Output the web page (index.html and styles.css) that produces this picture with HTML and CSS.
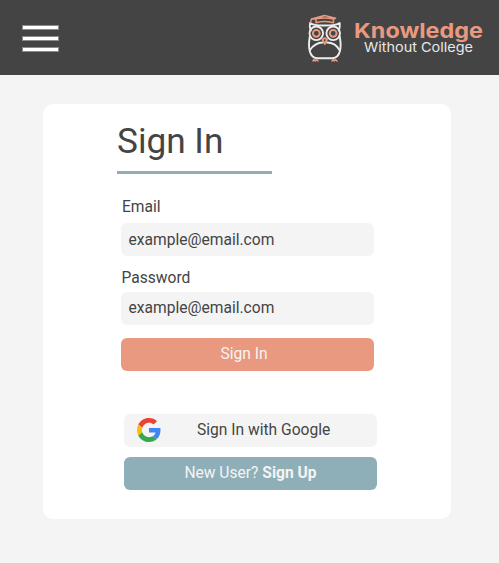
FILE: index.html
```html
<!DOCTYPE html>
<html lang="en">
<head>
<meta charset="utf-8">
<title>Sign In</title>
<link rel="stylesheet" href="styles.css">
</head>
<body>
<header class="topbar">
  <button class="menu" aria-label="Menu"><span></span><span></span><span></span></button>
  <div class="brand">
    <svg class="owl" width="36" height="49" viewBox="0 0 36 49" fill="none" stroke-linejoin="round" stroke-linecap="round">
      <g stroke="#ededed" stroke-width="1.900">
        <path d="M3 10C7 12.800 12 12.500 17.500 12.500S28.500 12.800 32.700 10C33.200 13 32.500 15.500 31.800 17.500M3 10C2.400 13 3 15.500 3.800 17.500"/>
        <circle cx="9.300" cy="20.300" r="6.800"/>
        <circle cx="26.200" cy="20.300" r="6.800"/>
        <path d="M2.800 23.500C1 34 2 44.500 10 45.300H25.500C33.800 44.500 34.700 34 32.700 23.500"/>
        <path d="M3 37C5.500 32.500 11 29.500 15.500 29.500M20 29.500C25 29.500 30 32.500 32.500 37"/>
      </g>
      <g stroke="#e8997f" stroke-width="1.500">
        <path d="M9 9.800V5.800L17.500 2.500 28.500 5.300 26.500 6V9.800C21 8.200 14 8.200 9 9.800ZM9 5.800C14 4.800 21 4.800 26.500 6M9 5.800 4.500 6 3.500 9.500M4.500 6 17.500 2.500"/>
        <circle cx="9.300" cy="20.300" r="3.400" stroke-width="2"/>
        <circle cx="26.200" cy="20.300" r="3.400" stroke-width="2"/>
        <path d="M15.500 26.500 17.700 25 20 26.500 17.700 31Z" stroke-width="1.800"/>
        <path d="M6 48 7 46.500 8.300 48 9.500 46.500 11 48M25 48 26 46.500 27.300 48 28.500 46.500 30 48"/>
      </g>
    </svg>
    <svg class="wordmark" width="132" height="42" viewBox="0 0 132 42">
      <text class="word-top" x="3" y="21.500" textLength="129" lengthAdjust="spacingAndGlyphs">Knowledge</text>
      <text class="word-sub" x="13" y="36" textLength="109" lengthAdjust="spacingAndGlyphs">Without College</text>
    </svg>
  </div>
</header>
<main class="card">
  <h1>Sign In</h1>
  <form class="form">
    <label class="email-label">Email</label>
    <div class="field">example@email.com</div>
    <label class="password-label">Password</label>
    <div class="field">example@email.com</div>
    <button type="button" class="btn submit">Sign In</button>
  </form>
  <div class="alternatives">
    <button type="button" class="btn google">
      <svg width="24" height="24" viewBox="0 0 48 48">
        <path fill="#ea4335" d="M24 9.500c3.540 0 6.710 1.220 9.210 3.600l6.850-6.850C35.900 2.380 30.470 0 24 0 14.620 0 6.510 5.380 2.560 13.220l7.980 6.190C12.430 13.720 17.740 9.500 24 9.500z"/>
        <path fill="#4285f4" d="M46.980 24.550c0-1.570-.15-3.090-.38-4.550H24v9.020h12.940c-.58 2.960-2.260 5.480-4.780 7.180l7.730 6c4.510-4.180 7.090-10.360 7.090-17.650z"/>
        <path fill="#fbbc05" d="M10.530 28.590c-.48-1.450-.76-2.990-.76-4.590s.27-3.140.76-4.590l-7.980-6.190C.92 16.460 0 20.120 0 24s.92 7.540 2.560 10.780z"/>
        <path fill="#34a853" d="M24 48c6.480 0 11.930-2.130 15.890-5.810l-7.730-6c-2.150 1.450-4.920 2.300-8.160 2.300-6.260 0-11.570-4.220-13.470-9.910l-7.980 6.190C6.510 42.620 14.620 48 24 48z"/>
      </svg>
      <span>Sign In with Google</span>
    </button>
    <button type="button" class="btn signup">New User? <b>Sign Up</b></button>
  </div>
</main>
</body>
</html>
```

FILE: styles.css
```css
* { box-sizing: border-box; }
body {
  margin: 0;
  min-height: 563px;
  background: #f4f4f4;
  color: #444;
  font: 15.600px/20px Roboto, sans-serif;
}
.topbar {
  display: flex;
  justify-content: space-between;
  height: 75px;
  padding: 0 16px 0 22px;
  background: #444;
}
.menu {
  display: flex;
  flex-direction: column;
  gap: 6px;
  width: 37px;
  margin: 24.500px 0 0;
  padding: 0;
  border: 0;
  background: none;
}
.menu span {
  width: 37px;
  height: 5px;
  border: 1px solid #8a8a8a;
  background: #fff;
}
.brand { display: flex; padding-top: 13px; }
.owl { margin-right: 8px; }
.wordmark { margin-top: 3px; overflow: visible; }
.word-top { font: 700 20.500px Inter, sans-serif; fill: #e8997f; }
.word-sub { font: 400 13px Inter, sans-serif; fill: #e8e8e8; }
.card {
  width: 408px;
  height: 415px;
  margin: 28.500px 0 0 43px;
  padding: 17px 74px 0;
  border-radius: 10px;
  background: #fff;
}
h1 {
  width: 155px;
  height: 53px;
  margin: 0;
  border-bottom: 3px solid #8fafb8;
  font-size: 35.200px;
  font-weight: 400;
  line-height: 41px;
}
.form {
  display: flex;
  flex-direction: column;
  width: 253px;
  margin: 23px 0 0 3.500px;
}
.email-label { margin: 0 0 6.500px 1.500px; }
.password-label { margin: 11.500px 0 4px 1px; }
.field {
  height: 33px;
  padding: 6.500px 8px;
  border-radius: 6px;
  background: #f4f4f4;
}
.btn {
  width: 253px;
  height: 33px;
  padding: 0;
  border: 0;
  border-radius: 6px;
  color: #f4f4f4;
  font: inherit;
}
.submit { margin-top: 13px; padding-right: 6px; background: #e8997f; }
.alternatives {
  display: flex;
  flex-direction: column;
  gap: 10px;
  margin: 43px 0 0 7px;
}
.google {
  display: flex;
  align-items: center;
  padding-left: 13px;
  background: #f4f4f4;
  color: #444;
}
.google span { margin-left: 36px; }
.signup { background: #8fafb8; }
```
